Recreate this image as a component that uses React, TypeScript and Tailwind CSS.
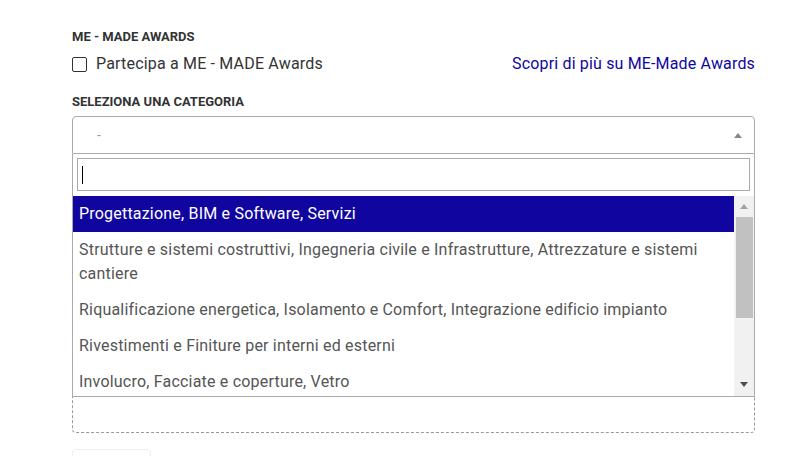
const options = [
  'Progettazione, BIM e Software, Servizi',
  'Strutture e sistemi costruttivi, Ingegneria civile e Infrastrutture, Attrezzature e sistemi cantiere',
  'Riqualificazione energetica, Isolamento e Comfort, Integrazione edificio impianto',
  'Rivestimenti e Finiture per interni ed esterni',
  'Involucro, Facciate e coperture, Vetro',
]

export default function App() {
  return (
    <div className="min-h-screen bg-white font-['Roboto',sans-serif] text-[#333]">
      <div className="ml-[72px] w-[683px] pt-[29px]">
        <h3 className="text-[13px] leading-4 font-bold uppercase">ME - MADE AWARDS</h3>

        <div className="mt-[9px] flex h-[20px] items-center justify-between">
          <label className="flex items-center gap-[9px] text-[16px] leading-5 tracking-[0.18px]">
            <span className="h-[15px] w-[15px] rounded-[2px] border-[1.5px] border-[#333]" />
            Partecipa a ME - MADE Awards
          </label>
          <a className="text-[16px] leading-5 tracking-[0.16px] text-[#10069f]">Scopri di più su ME-Made Awards</a>
        </div>

        <h3 className="mt-[20px] text-[13px] leading-4 font-bold uppercase">Seleziona una categoria</h3>

        {/* Select2 style dropdown, open */}
        <div className="relative mt-[6px]">
          <div className="flex h-[38px] items-center justify-between rounded-t-[4px] border border-[#aaa] pl-[24px] pr-[12px]">
            <span className="text-[14px] text-[#999]">-</span>
            <span className="h-0 w-0 border-x-4 border-b-[5px] border-x-transparent border-b-[#888]" />
          </div>

          <div className="absolute top-full right-0 left-0 z-10 border-x border-b border-[#aaa] bg-white">
            <div className="px-[4px] pt-[4px] pb-[5px]">
              <div className="flex h-[33px] items-center border border-[#aaa] px-[4px]">
                <span className="h-[18px] w-px bg-black" />
              </div>
            </div>

            <div className="flex h-[200px]">
              <ul className="flex-1 overflow-hidden">
                {options.map((opt, i) => (
                  <li
                    key={opt}
                    className={`px-[6px] py-[6px] text-[16px] leading-6 tracking-[0.2px] ${
                      i === 0 ? 'bg-[#10069f] text-white' : 'text-[#555]'
                    }`}
                  >
                    {opt}
                  </li>
                ))}
              </ul>

              {/* scrollbar */}
              <div className="flex w-[20px] flex-col bg-[#f1f1f1]">
                <div className="flex h-[21px] items-center justify-center">
                  <span className="h-0 w-0 border-x-[4.5px] border-b-[5px] border-x-transparent border-b-[#a3a3a3]" />
                </div>
                <div className="mr-[1px] ml-[2px] h-[101px] bg-[#c1c1c1]" />
                <div className="flex-1" />
                <div className="flex h-[24px] items-center justify-center">
                  <span className="h-0 w-0 border-x-[4.5px] border-t-[5px] border-x-transparent border-t-[#505050]" />
                </div>
              </div>
            </div>
          </div>
        </div>

        <div className="mt-[16px] h-[263px] rounded-[4px] border border-dashed border-[#999]" />

        <div className="mt-[16px] h-[34px] w-[79px] rounded-[4px] border border-[#eee]" />
      </div>
    </div>
  )
}
